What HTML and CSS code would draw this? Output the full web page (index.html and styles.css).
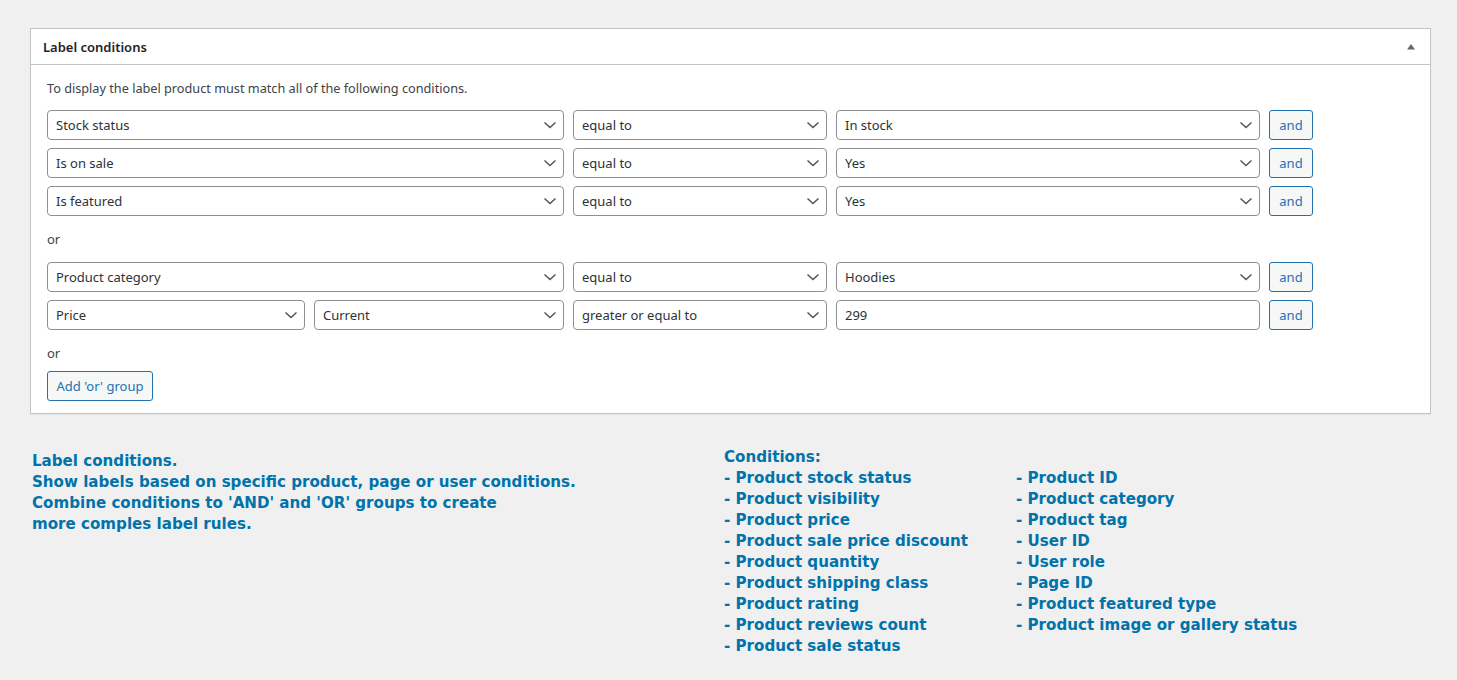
FILE: index.html
```html
<!DOCTYPE html>
<html lang="en">
<head>
<meta charset="utf-8">
<title>Label conditions</title>
<link rel="stylesheet" href="styles.css">
</head>
<body>
<div class="wrap">
  <div class="postbox">
    <div class="postbox-header">
      <h2 class="hndle">Label conditions</h2>
      <span class="toggle"><svg width="10" height="7" viewBox="0 0 10 7"><path d="M1 6.5 L5 1 L9 6.5 Z" fill="#646970"/></svg></span>
    </div>
    <div class="inside">
      <p class="desc">To display the label product must match all of the following conditions.</p>
      <div class="group">
        <div class="row">
          <select class="sel sel-param"><option>Stock status</option></select>
          <select class="sel sel-op"><option>equal to</option></select>
          <select class="sel sel-val"><option>In stock</option></select>
          <button class="btn btn-and">and</button>
        </div>
        <div class="row">
          <select class="sel sel-param"><option>Is on sale</option></select>
          <select class="sel sel-op"><option>equal to</option></select>
          <select class="sel sel-val"><option>Yes</option></select>
          <button class="btn btn-and">and</button>
        </div>
        <div class="row">
          <select class="sel sel-param"><option>Is featured</option></select>
          <select class="sel sel-op"><option>equal to</option></select>
          <select class="sel sel-val"><option>Yes</option></select>
          <button class="btn btn-and">and</button>
        </div>
      </div>
      <div class="or">or</div>
      <div class="group">
        <div class="row">
          <select class="sel sel-param"><option>Product category</option></select>
          <select class="sel sel-op"><option>equal to</option></select>
          <select class="sel sel-val"><option>Hoodies</option></select>
          <button class="btn btn-and">and</button>
        </div>
        <div class="row">
          <select class="sel sel-half1"><option>Price</option></select>
          <select class="sel sel-half2"><option>Current</option></select>
          <select class="sel sel-op"><option>greater or equal to</option></select>
          <input class="inp sel-val" type="text" value="299">
          <button class="btn btn-and">and</button>
        </div>
      </div>
      <div class="or">or</div>
      <button class="btn btn-add">Add 'or' group</button>
    </div>
  </div>

  <div class="info">
    <div class="info-left">
      Label conditions.<br>
      Show labels based on specific product, page or user conditions.<br>
      Combine conditions to 'AND' and 'OR' groups to create<br>
      more comples label rules.
    </div>
    <div class="info-right">
      <div class="info-head">Conditions:</div>
      <div class="info-cols">
        <ul class="list list-a">
          <li>- Product stock status</li>
          <li>- Product visibility</li>
          <li>- Product price</li>
          <li>- Product sale price discount</li>
          <li>- Product quantity</li>
          <li>- Product shipping class</li>
          <li>- Product rating</li>
          <li>- Product reviews count</li>
          <li>- Product sale status</li>
        </ul>
        <ul class="list list-b">
          <li>- Product ID</li>
          <li>- Product category</li>
          <li>- Product tag</li>
          <li>- User ID</li>
          <li>- User role</li>
          <li>- Page ID</li>
          <li>- Product featured type</li>
          <li>- Product image or gallery status</li>
        </ul>
      </div>
    </div>
  </div>
</div>
</body>
</html>
```

FILE: styles.css
```css
html, body {
  margin: 0;
  padding: 0;
  background: #f0f0f1;
}
body {
  font-family: "Noto Sans", "Open Sans", sans-serif;
  font-size: 13px;
  color: #3c434a;
}
.wrap {
  padding: 28px 26px 0 30px;
}
.postbox {
  background: #fff;
  border: 1px solid #c3c4c7;
  box-shadow: 0 1px 1px rgba(0,0,0,0.04);
}
.postbox-header {
  display: flex;
  align-items: center;
  justify-content: space-between;
  height: 35px;
  border-bottom: 1px solid #c3c4c7;
  padding: 0 14px 0 12px;
}
.hndle {
  margin: 0;
  font-size: 13px;
  font-weight: 600;
  color: #1d2327;
  line-height: 20px;
}
.toggle {
  display: flex;
  align-items: center;
}
.inside {
  padding: 13px 16px 12px 16px;
}
.desc {
  margin: 0 0 12px 0;
  line-height: 20px;
  font-size: 12.7px;
  color: #3c434a;
}
.group {
  display: flex;
  flex-direction: column;
  gap: 8px;
}
.row {
  display: flex;
  gap: 9px;
  align-items: center;
}
.sel, .inp {
  box-sizing: border-box;
  height: 30px;
  margin: 0;
  border: 1px solid #8c8f94;
  border-radius: 4px;
  background-color: #fff;
  color: #2c3338;
  font-family: "Noto Sans", "Open Sans", sans-serif;
  font-size: 13px;
  padding: 0 24px 0 8px;
  line-height: 28px;
}
.sel {
  -webkit-appearance: none;
  appearance: none;
  background-image: url("data:image/svg+xml;charset=utf-8,%3Csvg xmlns='http://www.w3.org/2000/svg' width='20' height='20' viewBox='0 0 20 20'%3E%3Cpath d='M4.5 7.5 L10 12.5 L15.5 7.5' fill='none' stroke='%23555' stroke-width='1.5'/%3E%3C/svg%3E");
  background-repeat: no-repeat;
  background-position: right 3px top 50%;
  background-size: 20px 20px;
}
.inp {
  padding: 0 8px;
  outline: none;
}
.sel-param { width: 517px; }
.sel-op { width: 254px; }
.sel-val { width: 424px; }
.sel-half1 { width: 258px; }
.sel-half2 { width: 250px; }
.btn {
  box-sizing: border-box;
  height: 30px;
  margin: 0;
  border: 1px solid #2271b1;
  border-radius: 3px;
  background: #f6f7f7;
  color: #2271b1;
  font-family: "Noto Sans", "Open Sans", sans-serif;
  font-size: 13px;
  padding: 0 10px;
  line-height: 28px;
  cursor: pointer;
}
.btn-and { width: 44px; padding: 0; }
.btn-add { width: 106px; padding: 0; }
.or {
  margin: 13px 0;
  line-height: 20px;
  color: #3c434a;
}
.btn-add { margin-top: -5px; }

.info {
  display: flex;
  margin-top: 33px;
  color: #0073aa;
  font-family: "DejaVu Sans", Verdana, sans-serif;
  font-weight: bold;
  font-size: 15.1px;
  line-height: 21px;
}
.info-left {
  width: 692px;
  padding-left: 2px;
  padding-top: 4px;
}
.info-head {
  line-height: 21px;
}
.info-cols {
  display: flex;
}
.list {
  list-style: none;
  margin: 0;
  padding: 0;
}
.list-a { width: 292px; }
```
